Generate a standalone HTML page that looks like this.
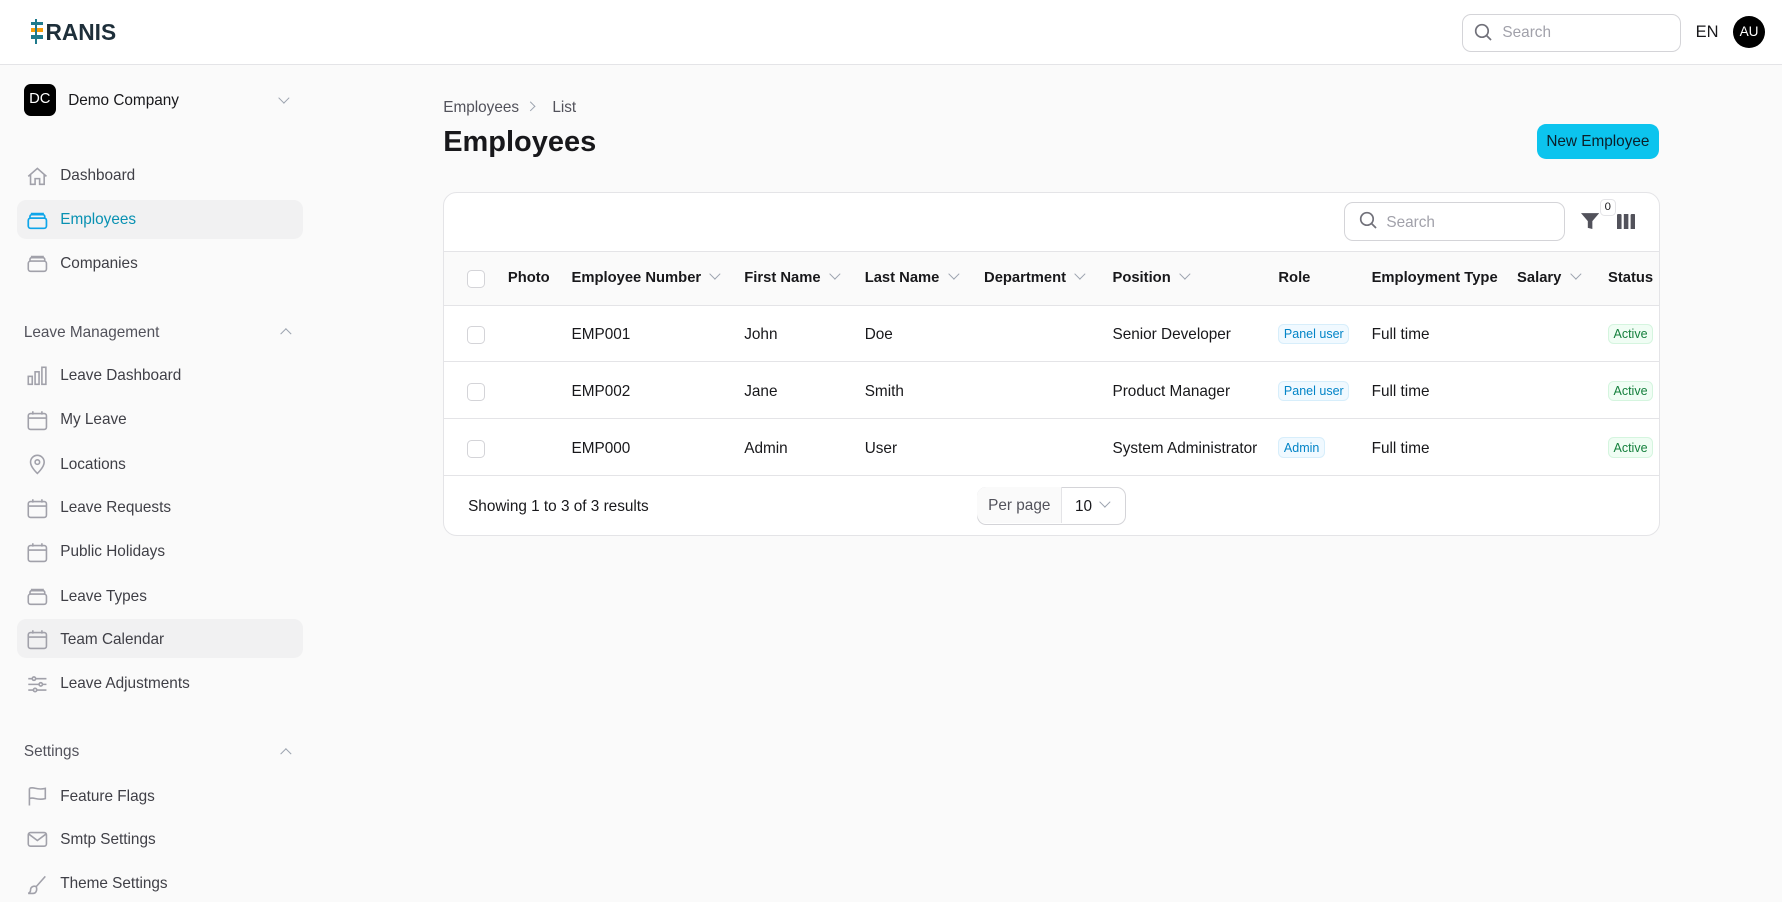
<!DOCTYPE html>
<html><head><meta charset="utf-8">
<style>
html{zoom:1.13648}
body{margin:0;width:1568px;height:788px;overflow:hidden;background:#fafafa;font-family:"Liberation Sans",sans-serif;color:#18181b;font-size:13.5px;position:relative}
.a{position:absolute}
.hdr{left:0;top:0;width:1568px;height:56px;background:#fff;border-bottom:1px solid #e4e4e7}
.nav{left:15px;width:252px;height:34px;border-radius:8px}
.nav svg{position:absolute;left:8px;top:8px}
.nav span{position:absolute;left:38px;top:10px;color:#3f3f46;font-size:13.5px}
.sec{left:21px;color:#52525b;font-size:13.5px}
.card{left:390px;top:169px;width:1069px;height:301px;background:#fff;border:1px solid #e4e4e7;border-radius:12px;overflow:hidden}
.th{font-weight:bold;font-size:13px;top:68px}
.cb{width:14px;height:14px;border:1px solid #d4d4d8;border-radius:4px;background:#fff}
.chev{display:inline-block;width:6px;height:6px;border-right:1.3px solid #9ca3af;border-bottom:1.3px solid #9ca3af;transform:rotate(45deg);margin-left:9px;position:relative;top:-4px}
.badge{font-size:11px;padding:2px 4px;border-radius:5px}
.blue{color:#0284c7;background:#f0f9ff;border:1px solid #d7eefb}
.green{color:#15803d;background:#f0fdf4;border:1px solid #d5f5df}
.r{top:117px}
</style></head><body>
<div class="a hdr"></div>
<div class="a" style="left:27px;top:17px;width:11px;height:22px">
<div class="a" style="left:0;top:2px;width:11px;height:3px;background:#1f7a8c"></div>
<div class="a" style="left:0;top:8px;width:11px;height:3px;background:#f59e0b"></div>
<div class="a" style="left:0;top:14px;width:11px;height:3px;background:#1f7a8c"></div>
<div class="a" style="left:4px;top:0;width:2px;height:22px;background:#1f7a8c"></div>
</div>
<div class="a" style="left:40px;top:17px;font-weight:bold;font-size:20px;color:#1e2f3a">RANIS</div>
<div class="a" style="left:1286px;top:12px;width:191px;height:32px;border:1px solid #d4d4d8;border-radius:8px;background:#fff"></div>
<svg class="a" style="left:1297px;top:20px" width="16" height="16" viewBox="0 0 16 16" fill="none" stroke="#71717a" stroke-width="1.5"><circle cx="7" cy="7" r="5.5"/><path d="M11 11l4 4"/></svg>
<div class="a" style="left:1322px;top:21px;color:#a1a1aa">Search</div>
<div class="a" style="left:1492px;top:20px;font-size:14.5px">EN</div>
<div class="a" style="left:1525px;top:14px;width:28px;height:28px;border-radius:50%;background:#000;color:#fff;font-size:12px;text-align:center;line-height:28px">AU</div>

<div class="a" style="left:21px;top:74px;width:28px;height:28px;border-radius:6px;background:#000;color:#fff;font-size:13px;text-align:center;line-height:28px">DC</div>
<div class="a" style="left:60px;top:81px">Demo Company</div>
<div class="a" style="left:246px;top:82px"><span class="chev" style="margin:0"></span></div>

<div class="a nav" style="top:137px"><svg width="20" height="20" viewBox="0 0 20 20" fill="none" stroke="#a1a1aa" stroke-width="1.4"><path d="M2 10L10 3l8 7M4 8v9h4v-5h4v5h4V8"/></svg><span>Dashboard</span></div>
<div class="a nav" style="top:176px;background:#f1f1f2"><svg width="20" height="20" viewBox="0 0 20 20" fill="none" stroke="#0ea5e9" stroke-width="1.5"><rect x="2" y="8" width="16" height="9" rx="2"/><path d="M3.5 8V6.5a1.5 1.5 0 011.5-1.5h10a1.5 1.5 0 011.5 1.5V8M5 5V4h10v1"/></svg><span style="color:#0891b2">Employees</span></div>
<div class="a nav" style="top:214px"><svg width="20" height="20" viewBox="0 0 20 20" fill="none" stroke="#a1a1aa" stroke-width="1.4"><rect x="2" y="8" width="16" height="9" rx="2"/><path d="M3.5 8V6.5a1.5 1.5 0 011.5-1.5h10a1.5 1.5 0 011.5 1.5V8M5 5V4h10v1"/></svg><span>Companies</span></div>

<div class="a sec" style="top:285px">Leave Management</div>
<div class="a" style="left:248px;top:290px"><span class="chev" style="margin:0;transform:rotate(225deg)"></span></div>
<div class="a nav" style="top:313px"><svg width="20" height="20" viewBox="0 0 20 20" fill="none" stroke="#a1a1aa" stroke-width="1.4"><rect x="2" y="10" width="3.5" height="7"/><rect x="8" y="6" width="3.5" height="11"/><rect x="14" y="2" width="3.5" height="15"/></svg><span>Leave Dashboard</span></div>
<div class="a nav" style="top:352px"><svg width="20" height="20" viewBox="0 0 20 20" fill="none" stroke="#a1a1aa" stroke-width="1.4"><rect x="2" y="4" width="16" height="14" rx="2"/><path d="M2 8h16M6 2v3M14 2v3"/></svg><span>My Leave</span></div>
<div class="a nav" style="top:391px"><svg width="20" height="20" viewBox="0 0 20 20" fill="none" stroke="#a1a1aa" stroke-width="1.4"><path d="M10 18s6-5.5 6-10a6 6 0 00-12 0c0 4.5 6 10 6 10z"/><circle cx="10" cy="8" r="2"/></svg><span>Locations</span></div>
<div class="a nav" style="top:429px"><svg width="20" height="20" viewBox="0 0 20 20" fill="none" stroke="#a1a1aa" stroke-width="1.4"><rect x="2" y="4" width="16" height="14" rx="2"/><path d="M2 8h16M6 2v3M14 2v3"/></svg><span>Leave Requests</span></div>
<div class="a nav" style="top:468px"><svg width="20" height="20" viewBox="0 0 20 20" fill="none" stroke="#a1a1aa" stroke-width="1.4"><rect x="2" y="4" width="16" height="14" rx="2"/><path d="M2 8h16M6 2v3M14 2v3"/></svg><span>Public Holidays</span></div>
<div class="a nav" style="top:507px"><svg width="20" height="20" viewBox="0 0 20 20" fill="none" stroke="#a1a1aa" stroke-width="1.4"><rect x="2" y="8" width="16" height="9" rx="2"/><path d="M3.5 8V6.5a1.5 1.5 0 011.5-1.5h10a1.5 1.5 0 011.5 1.5V8M5 5V4h10v1"/></svg><span>Leave Types</span></div>
<div class="a nav" style="top:545px;background:#f1f1f2"><svg width="20" height="20" viewBox="0 0 20 20" fill="none" stroke="#a1a1aa" stroke-width="1.4"><rect x="2" y="4" width="16" height="14" rx="2"/><path d="M2 8h16M6 2v3M14 2v3"/></svg><span>Team Calendar</span></div>
<div class="a nav" style="top:584px"><svg width="20" height="20" viewBox="0 0 20 20" fill="none" stroke="#a1a1aa" stroke-width="1.4"><path d="M2 5h16M2 10h16M2 15h16"/><circle cx="7" cy="5" r="1.5" fill="#fafafa"/><circle cx="13" cy="10" r="1.5" fill="#fafafa"/><circle cx="8" cy="15" r="1.5" fill="#fafafa"/></svg><span>Leave Adjustments</span></div>

<div class="a sec" style="top:654px">Settings</div>
<div class="a" style="left:248px;top:659px"><span class="chev" style="margin:0;transform:rotate(225deg)"></span></div>
<div class="a nav" style="top:683px"><svg width="20" height="20" viewBox="0 0 20 20" fill="none" stroke="#a1a1aa" stroke-width="1.4"><path d="M3 18V3M3 3c4-2 6 2 14 0v9c-8 2-10-2-14 0"/></svg><span>Feature Flags</span></div>
<div class="a nav" style="top:721px"><svg width="20" height="20" viewBox="0 0 20 20" fill="none" stroke="#a1a1aa" stroke-width="1.4"><rect x="2" y="4" width="16" height="12" rx="2"/><path d="M2 5l8 6 8-6"/></svg><span>Smtp Settings</span></div>
<div class="a nav" style="top:760px"><svg width="20" height="20" viewBox="0 0 20 20" fill="none" stroke="#a1a1aa" stroke-width="1.4"><path d="M17 3l-8 9M9 12c-2-1-5 0-5 3 0 2-2 3-2 3h4c3 0 4-3 3-6z"/></svg><span>Theme Settings</span></div>

<div class="a" style="left:390px;top:87px;color:#52525b">Employees</div>
<div class="a" style="left:464px;top:89px"><span class="chev" style="margin:0;transform:rotate(-45deg);width:5px;height:5px"></span></div>
<div class="a" style="left:486px;top:87px;color:#52525b">List</div>
<div class="a" style="left:390px;top:111px;font-size:25.5px;font-weight:bold">Employees</div>
<div class="a" style="left:1352px;top:109px;width:108px;height:31px;border-radius:8px;background:#0cc4ee;color:#0b1f2a;text-align:center;line-height:32px;font-size:13.5px">New Employee</div>

<div class="a card">
<div class="a" style="left:792px;top:8px;width:192px;height:32px;border:1px solid #d4d4d8;border-radius:8px"></div>
<svg class="a" style="left:805px;top:16px" width="16" height="16" viewBox="0 0 16 16" fill="none" stroke="#71717a" stroke-width="1.5"><circle cx="7" cy="7" r="5.5"/><path d="M11 11l4 4"/></svg>
<div class="a" style="left:829px;top:18px;color:#a1a1aa">Search</div>
<svg class="a" style="left:1000px;top:17px" width="16" height="16" viewBox="0 0 16 16"><path d="M0 1h16l-6 7v7l-4-1V8z" fill="#52525b"/></svg>
<div class="a" style="left:1017px;top:5px;width:12px;height:13px;border:1px solid #e4e4e7;border-radius:4px;background:#fff;font-size:10px;text-align:center;line-height:13px">0</div>
<svg class="a" style="left:1032px;top:18px" width="16" height="14" viewBox="0 0 16 14" fill="#52525b"><rect x="0" y="0" width="4" height="14" rx="1"/><rect x="6" y="0" width="4" height="14"/><rect x="12" y="0" width="4" height="14" rx="1"/></svg>
<div class="a" style="left:0;top:51px;width:1069px;height:47px;background:#fafafa;border-top:1px solid #e4e4e7;border-bottom:1px solid #e4e4e7"></div>
<div class="a cb" style="left:20px;top:68px"></div>
<div class="a th" style="left:56px">Photo</div>
<div class="a th" style="left:112px">Employee Number<span class="chev"></span></div>
<div class="a th" style="left:264px">First Name<span class="chev"></span></div>
<div class="a th" style="left:370px">Last Name<span class="chev"></span></div>
<div class="a th" style="left:475px">Department<span class="chev"></span></div>
<div class="a th" style="left:588px">Position<span class="chev"></span></div>
<div class="a th" style="left:734px">Role</div>
<div class="a th" style="left:816px">Employment Type</div>
<div class="a th" style="left:944px">Salary<span class="chev"></span></div>
<div class="a th" style="left:1024px">Status</div>

<div class="a" style="left:0;top:148px;width:1069px;border-top:1px solid #e4e4e7"></div>
<div class="a" style="left:0;top:198px;width:1069px;border-top:1px solid #e4e4e7"></div>
<div class="a" style="left:0;top:248px;width:1069px;border-top:1px solid #e4e4e7"></div>

<div class="a cb" style="left:20px;top:117px"></div>
<div class="a" style="left:112px;top:117px">EMP001</div><div class="a" style="left:264px;top:117px">John</div><div class="a" style="left:370px;top:117px">Doe</div><div class="a" style="left:588px;top:117px">Senior Developer</div>
<div class="a badge blue" style="left:734px;top:115px">Panel user</div><div class="a" style="left:816px;top:117px">Full time</div><div class="a badge green" style="left:1024px;top:115px">Active</div>

<div class="a cb" style="left:20px;top:167px"></div>
<div class="a" style="left:112px;top:167px">EMP002</div><div class="a" style="left:264px;top:167px">Jane</div><div class="a" style="left:370px;top:167px">Smith</div><div class="a" style="left:588px;top:167px">Product Manager</div>
<div class="a badge blue" style="left:734px;top:165px">Panel user</div><div class="a" style="left:816px;top:167px">Full time</div><div class="a badge green" style="left:1024px;top:165px">Active</div>

<div class="a cb" style="left:20px;top:217px"></div>
<div class="a" style="left:112px;top:217px">EMP000</div><div class="a" style="left:264px;top:217px">Admin</div><div class="a" style="left:370px;top:217px">User</div><div class="a" style="left:588px;top:217px">System Administrator</div>
<div class="a badge blue" style="left:734px;top:215px">Admin</div><div class="a" style="left:816px;top:217px">Full time</div><div class="a badge green" style="left:1024px;top:215px">Active</div>

<div class="a" style="left:21px;top:268px">Showing 1 to 3 of 3 results</div>
<div class="a" style="left:469px;top:259px;width:129px;height:31px;border:1px solid #d4d4d8;border-radius:8px"></div>
<div class="a" style="left:469px;top:259px;width:74px;height:31px;border-right:1px solid #e4e4e7;background:#fafafa;border-radius:8px 0 0 8px;text-align:center;line-height:33px;color:#52525b">Per page</div>
<div class="a" style="left:555px;top:268px">10</div>
<div class="a" style="left:578px;top:268px"><span class="chev" style="margin:0"></span></div>
</div>
</body></html>
